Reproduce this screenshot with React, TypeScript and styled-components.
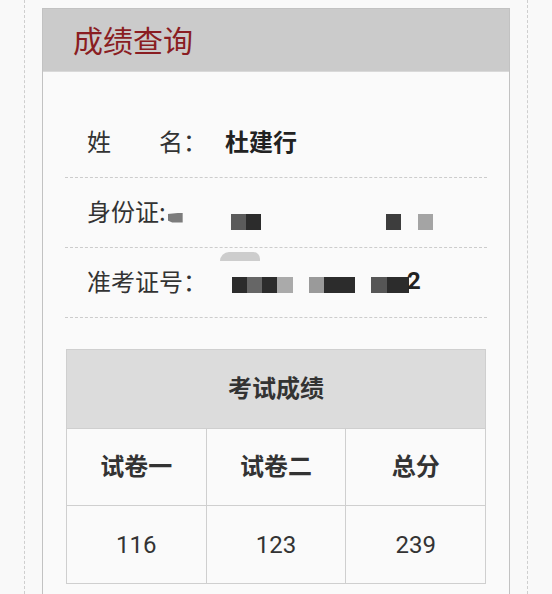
import React from "react";
import styled, { createGlobalStyle } from "styled-components";

const Global = createGlobalStyle`
  html, body { margin: 0; padding: 0; background: #f9f9f9; }
  body { font-family: "Roboto", "Noto Sans CJK SC", sans-serif; color: #333; }
`;

const Frame = styled.div`
  margin: 0 24px;
  box-sizing: border-box;
  border-left: 1px dashed #cfcfcf;
  border-right: 1px dashed #cfcfcf;
  padding: 8px 17px 0;
  overflow: hidden;
  height: 594px;
`;

const Card = styled.div`
  border: 1px solid #c2c2c2;
  border-bottom: none;
  background: #fafafa;
  height: 600px;
`;

const Header = styled.div`
  height: 63px;
  background: #cbcbcb;
  border-bottom: 1px solid #d9d9d9;
  display: flex;
  align-items: center;
  padding-left: 30px;
  padding-bottom: 2px;
  box-sizing: border-box;
  font-family: "Noto Sans CJK SC", sans-serif;
  font-size: 30px;
  color: #8a1d22;
`;

const Body = styled.div<{ $top: number }>`
  padding: ${(p) => p.$top}px 22px 0;
`;

const Row = styled.div`
  position: relative;
  height: 69px;
  box-sizing: content-box;
  border-bottom: 1px dashed #cccccc;
  display: flex;
  align-items: center;
  padding-left: 22px;
  font-family: "Noto Sans CJK SC", sans-serif;
  font-size: 24px;
  color: #333;
  &:first-child { height: 70px; }
`;

const Label = styled.span`
  white-space: pre;
  margin-top: -4px;
`;

const Value = styled.span<{ $gap: number }>`
  margin-left: ${(p) => p.$gap}px;
  margin-top: -4px;
  font-weight: 700;
  color: #222;
  display: flex;
  align-items: center;
`;

const Mosaic = styled.span<{ $shift: number }>`
  display: inline-flex;
  margin-top: ${(p) => p.$shift * 2}px;
`;

const Block = styled.span<{ $w: number; $c: string; $gap?: number; $h?: number }>`
  display: inline-block;
  width: ${(p) => p.$w}px;
  height: ${(p) => p.$h ?? 16}px;
  background: ${(p) => p.$c};
  margin-left: ${(p) => p.$gap ?? 0}px;
`;

const Shard = styled.span`
  display: inline-block;
  width: 15px;
  height: 10px;
  margin-top: 14px;
  background: #7c7c7c;
  clip-path: polygon(0 15%, 100% 0, 100% 100%, 30% 100%, 0 80%);
`;

const Arc = styled.span`
  position: absolute;
  left: 155px;
  top: 4px;
  width: 40px;
  height: 9px;
  background: #cdcdcd;
  border-radius: 40px 30px 0 0;
`;

const Two = styled.span`
  font-family: "Roboto", sans-serif;
  font-weight: 700;
  font-size: 24px;
  color: #222;
  margin-left: -2px;
`;

const Table = styled.table`
  margin: 31px 1px 0;
  width: calc(100% - 2px);
  border-collapse: collapse;
  table-layout: fixed;
  color: #333;
`;

const Th = styled.th<{ $bg?: boolean; $h: number }>`
  height: ${(p) => p.$h}px;
  border: 1px solid #cfcfcf;
  background: ${(p) => (p.$bg ? "#dcdcdc" : "#fafafa")};
  font-family: "Noto Sans CJK SC", sans-serif;
  font-size: 24px;
  font-weight: 700;
  text-align: center;
  padding: 0 0 6px;
`;

const Td = styled.td`
  height: 77px;
  border: 1px solid #cfcfcf;
  background: #fafafa;
  text-align: center;
  font-family: "Roboto", "Noto Sans CJK SC", sans-serif;
  font-size: 24px;
  padding: 0;
`;

export default function App() {
  return (
    <>
      <Global />
      <Frame>
        <Card>
          <Header>成绩查询</Header>
          <Body $top={35}>
            <Row>
              <Label>{"姓\u3000\u3000名："}</Label>
              <Value $gap={18}>杜建行</Value>
            </Row>
            <Row>
              <Label>身份证:</Label>
              <Value $gap={2}>
                <Shard />
                <Mosaic $shift={11}>
                  <Block $w={15} $c="#5b5b5b" $gap={48} />
                  <Block $w={15} $c="#2c2c2c" />
                  <Block $w={15} $c="#3d3d3d" $gap={125} />
                  <Block $w={15} $c="#a4a4a4" $gap={17} />
                </Mosaic>
              </Value>
            </Row>
            <Row>
              <Arc />
              <Label>准考证号：</Label>
              <Value $gap={25}>
                <Mosaic $shift={4}>
                  <Block $w={15} $c="#2c2c2c" />
                  <Block $w={15} $c="#666666" />
                  <Block $w={15} $c="#2c2c2c" />
                  <Block $w={16} $c="#aaaaaa" />
                  <Block $w={15} $c="#9a9a9a" $gap={16} />
                  <Block $w={31} $c="#2c2c2c" />
                  <Block $w={16} $c="#565656" $gap={16} />
                  <Block $w={22} $c="#2c2c2c" />
                </Mosaic>
                <Two>2</Two>
              </Value>
            </Row>
          </Body>
          <Body $top={0}>
            <Table>
              <thead>
                <tr>
                  <Th $bg $h={72} colSpan={3}>考试成绩</Th>
                </tr>
                <tr>
                  <Th $h={70}>试卷一</Th>
                  <Th $h={70}>试卷二</Th>
                  <Th $h={70}>总分</Th>
                </tr>
              </thead>
              <tbody>
                <tr>
                  <Td>116</Td>
                  <Td>123</Td>
                  <Td>239</Td>
                </tr>
              </tbody>
            </Table>
          </Body>
        </Card>
      </Frame>
    </>
  );
}
